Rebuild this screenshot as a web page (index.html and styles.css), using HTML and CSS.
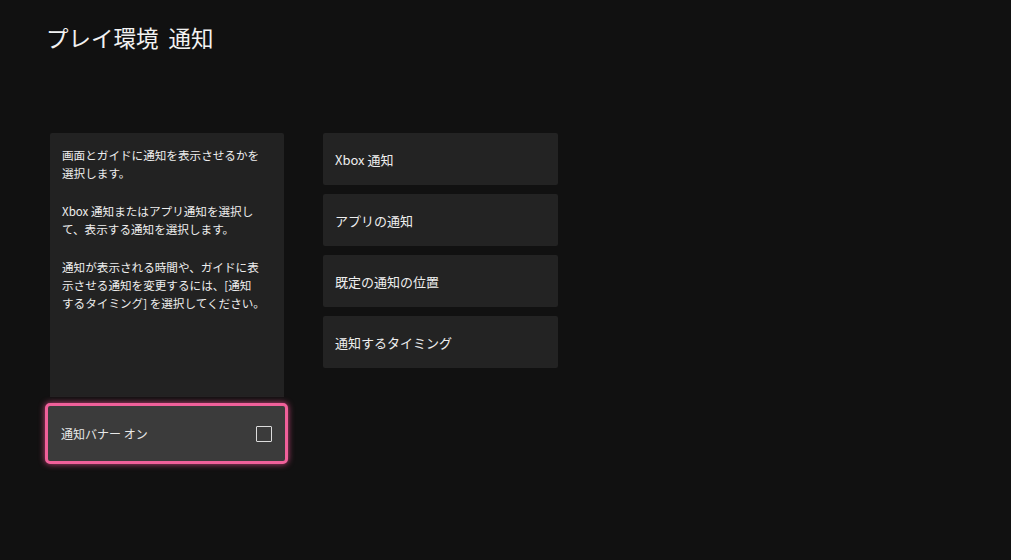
FILE: index.html
```html
<!DOCTYPE html>
<html lang="ja">
<head>
<meta charset="utf-8">
<link rel="stylesheet" href="styles.css">
</head>
<body>
<div class="page">
  <h1 class="title">プレイ環境&nbsp; 通知</h1>
  <div class="content">
    <div class="left">
      <div class="desc">
        <p>画面とガイドに通知を表示させるかを<br>選択します。</p>
        <p>Xbox 通知またはアプリ通知を選択し<br>て、表示する通知を選択します。</p>
        <p>通知が表示される時間や、ガイドに表<br>示させる通知を変更するには、[通知<br>するタイミング] を選択してください。</p>
      </div>
      <div class="toggle">
        <span>通知バナー オン</span>
        <span class="check"></span>
      </div>
    </div>
    <div class="right">
      <div class="item">Xbox 通知</div>
      <div class="item">アプリの通知</div>
      <div class="item">既定の通知の位置</div>
      <div class="item">通知するタイミング</div>
    </div>
  </div>
</div>
</body>
</html>
```
FILE: styles.css
```css
html, body {
  margin: 0;
  padding: 0;
  background: #111111;
}
body {
  width: 1011px;
  height: 560px;
  overflow: hidden;
  font-family: "Noto Sans CJK JP", "Noto Sans", sans-serif;
  color: #ececec;
}
.page {
  padding: 20px 0 0 46px;
}
.title {
  margin: 0;
  font-size: 22.5px;
  font-weight: 400;
  line-height: 34px;
  color: #f2f2f2;
}
.content {
  display: flex;
  gap: 39px;
  margin-top: 79px;
  margin-left: 4px;
}
.left {
  width: 234px;
  display: flex;
  flex-direction: column;
}
.desc {
  background: #222222;
  height: 264px;
  padding: 13px 12px 0 12px;
  box-sizing: border-box;
  border-radius: 2px 2px 0 0;
  font-size: 11.6px;
  line-height: 18px;
  color: #eeeeee;
}
.desc p {
  margin: 0 0 20px 0;
  white-space: nowrap;
}
.toggle {
  margin: 6px -4px 0 -5px;
  height: 61px;
  box-sizing: border-box;
  border: 3px solid #f0609a;
  border-radius: 5px;
  background: #3b3b3b;
  box-shadow: 0 0 6px rgba(240, 80, 145, 0.8);
  display: flex;
  align-items: center;
  justify-content: space-between;
  padding: 0 13px 0 13px;
  font-size: 12px;
  color: #e8e8e8;
}
.check {
  width: 16px;
  height: 16px;
  box-sizing: border-box;
  border: 1.5px solid #dcdcdc;
  border-radius: 1px;
}
.right {
  width: 235px;
  display: flex;
  flex-direction: column;
  gap: 9px;
}
.item {
  height: 52px;
  background: #232323;
  border-radius: 2px;
  display: flex;
  align-items: center;
  padding-left: 12px;
  font-size: 13px;
  color: #eeeeee;
}
```
